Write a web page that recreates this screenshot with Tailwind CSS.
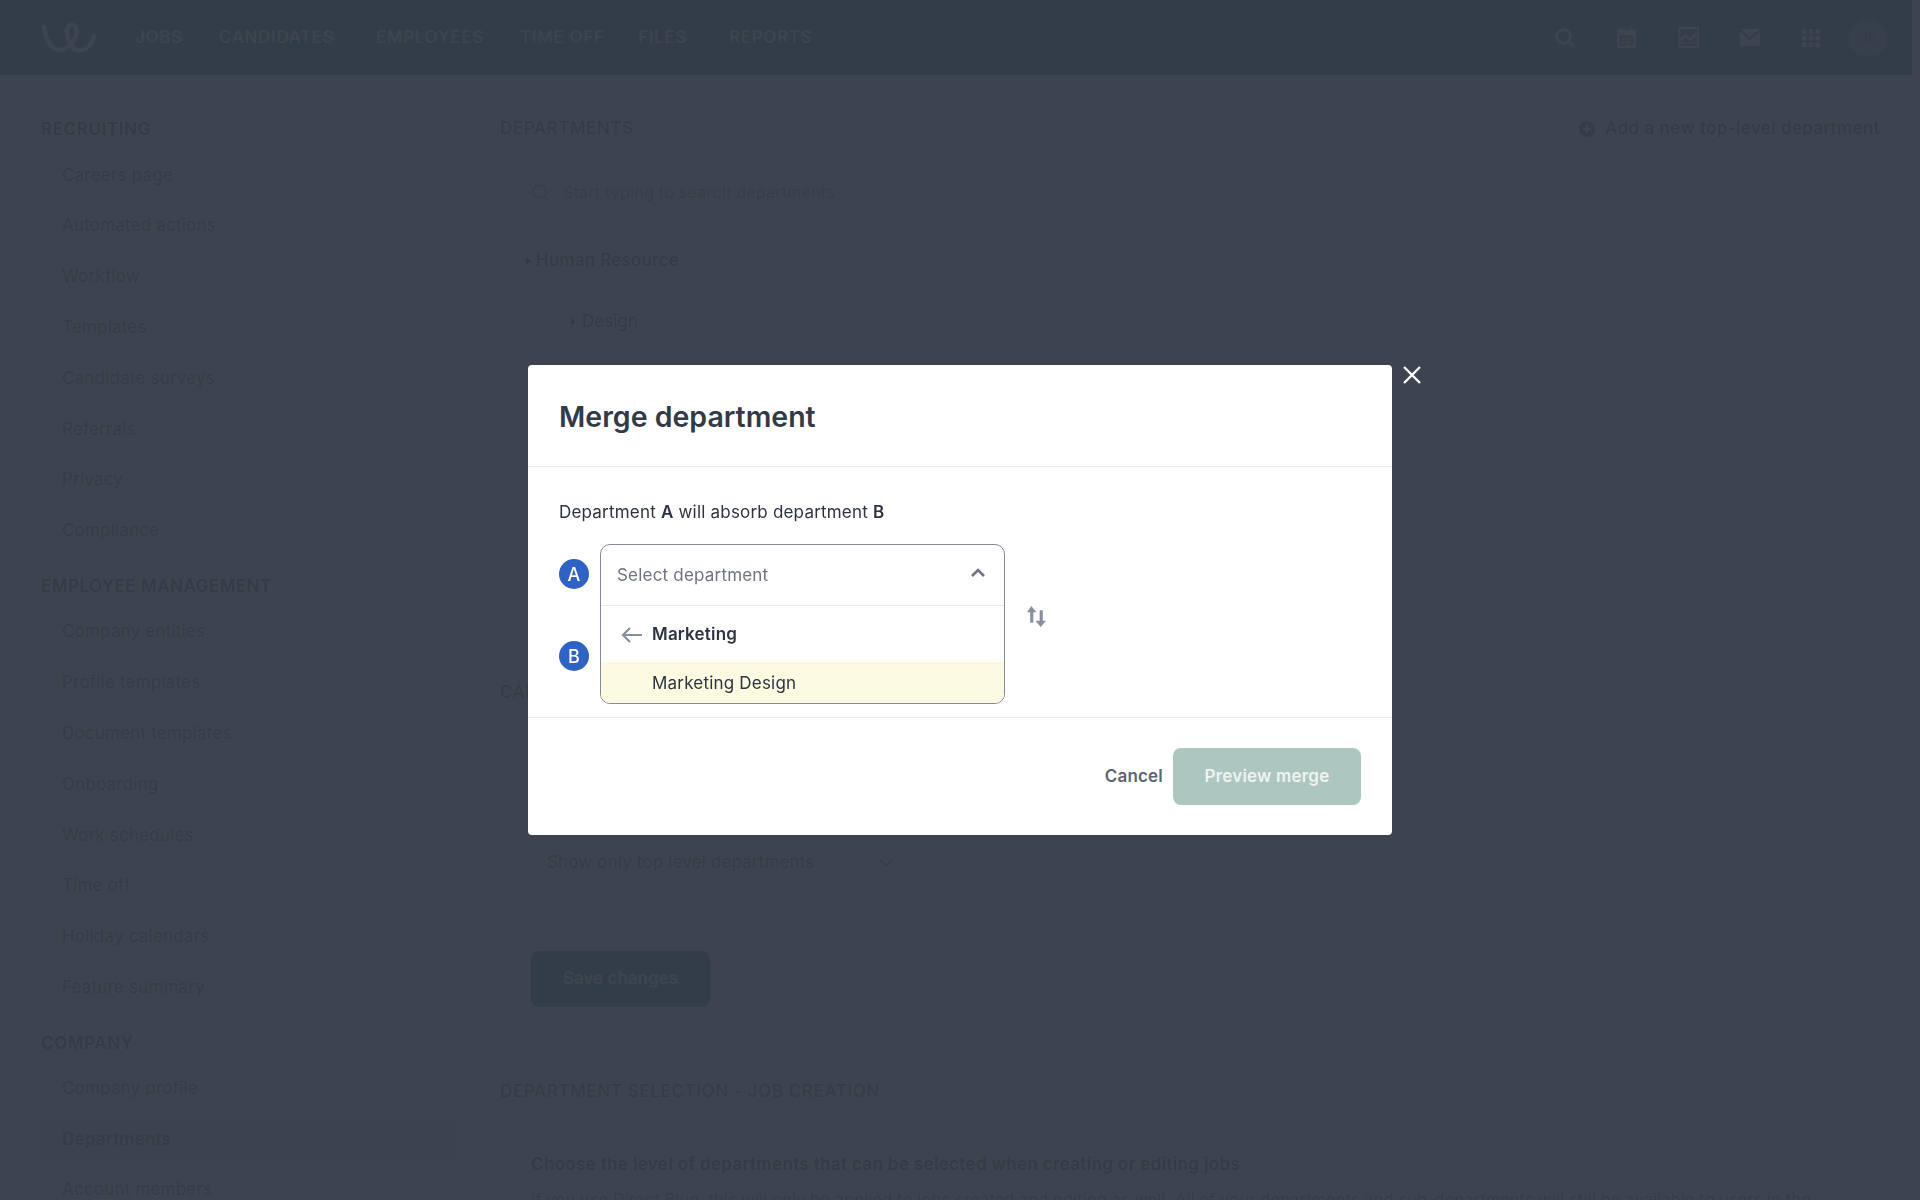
<!DOCTYPE html>
<html>
  <head>
    <meta charset="UTF-8" />
    <meta name="viewport" content="width=device-width, initial-scale=1.0" />
    <script src="https://cdn.jsdelivr.net/npm/@tailwindcss/browser@4"></script>
  </head>
  <body class="h-screen overflow-hidden bg-white font-['Inter',sans-serif] text-[#1f2733]">
    <!-- page behind the modal -->
    <header class="flex h-[75px] items-center bg-[#00604a] pl-[41px] pr-[33px] text-white">
      <svg class="h-[32px] w-[56px] opacity-90" viewBox="0 0 56 32" fill="none" stroke="currentColor" stroke-width="4.5" stroke-linecap="round">
        <path d="M3 5C5 20 12 29 20 28C26 27 36 16 36 10C36 5 33 3 31 3C28 3 25 6 26 12C27 20 33 29 38 28C45 28 52 22 53 14" />
      </svg>
      <nav class="ml-[38px] flex pt-[1px] text-[17px] font-medium tracking-[0.7px]">
        <a class="w-[84px]">JOBS</a>
        <a class="w-[157px]">CANDIDATES</a>
        <a class="w-[144px]">EMPLOYEES</a>
        <a class="w-[118px]">TIME OFF</a>
        <a class="w-[91px]">FILES</a>
        <a>REPORTS</a>
      </nav>
      <div class="ml-auto flex items-center">
        <svg class="mr-[41px] h-[20px] w-[20px]" viewBox="0 0 20 20" fill="none" stroke="currentColor" stroke-width="2.4"><circle cx="8.5" cy="8.5" r="7" /><path d="M13.500 13.500L19 19" /></svg>
        <svg class="mr-[41px] h-[21px] w-[21px]" viewBox="0 0 20 20" fill="currentColor"><path d="M1 3h3V1h2v2h8V1h2v2h3v17H1zM3.500 8v9.500h13V8zM5.500 10h2.500v2.500H5.500zM8.900 10h2.300v2.500H8.900zM12 10h2.500v2.500H12zM5.500 13.500h2.500V16H5.500zM8.900 13.500h2.300V16H8.900zM12 13.500h2.500V16H12z" fill-rule="evenodd" /></svg>
        <svg class="mr-[41px] h-[21px] w-[21px]" viewBox="0 0 20 20" fill="none" stroke="currentColor"><rect x="1" y="1" width="18" height="18" stroke-width="2" /><path d="M2 13l5-5 5 4 6-6" stroke-width="2.6" /><path d="M2 15h16" stroke-width="1" /></svg>
        <svg class="mr-[41px] h-[17px] w-[20px]" viewBox="0 0 20 17" fill="currentColor"><path d="M0 0h20L10 8zM0 3l10 8 10-8v14H0z" /></svg>
        <svg class="mr-[28px] h-[20px] w-[20px]" viewBox="0 0 20 20" fill="currentColor"><path d="M1 1h4.500v4.500H1zM7.750 1h4.500v4.500h-4.500zM14.500 1H19v4.500h-4.500zM1 7.750h4.500v4.500H1zM7.750 7.750h4.500v4.500h-4.500zM14.500 7.750H19v4.500h-4.500zM1 14.500h4.500V19H1zM7.750 14.500h4.500V19h-4.500zM14.500 14.500H19V19h-4.500z" /></svg>
        <div class="flex h-[38px] w-[38px] items-center justify-center rounded-full bg-[#5c9c8c] text-[14px] text-[#1f2733]">JS</div>
      </div>
    </header>

    <div class="flex">
      <aside class="w-[500px] shrink-0 pl-[41px] pr-[45px] pt-[42px] text-[17px] tracking-[0.2px]">
        <h3 class="h-[24px] text-[17px] leading-[24px] font-semibold tracking-[0.6px]">RECRUITING</h3>
        <ul class="mt-[9px] flex flex-col text-[#3a4350]">
          <li class="flex h-[50.8px] items-center pl-[21px]">Careers page</li>
          <li class="flex h-[50.8px] items-center pl-[21px]">Automated actions</li>
          <li class="flex h-[50.8px] items-center pl-[21px]">Workflow</li>
          <li class="flex h-[50.8px] items-center pl-[21px]">Templates</li>
          <li class="flex h-[50.8px] items-center pl-[21px]">Candidate surveys</li>
          <li class="flex h-[50.8px] items-center pl-[21px]">Referrals</li>
          <li class="flex h-[50.8px] items-center pl-[21px]">Privacy</li>
          <li class="flex h-[50.8px] items-center pl-[21px]">Compliance</li>
        </ul>
        <h3 class="mt-[17.4px] h-[24px] text-[17px] leading-[24px] font-semibold tracking-[0.5px]">EMPLOYEE MANAGEMENT</h3>
        <ul class="mt-[9px] flex flex-col text-[#3a4350]">
          <li class="flex h-[50.8px] items-center pl-[21px]">Company entities</li>
          <li class="flex h-[50.8px] items-center pl-[21px]">Profile templates</li>
          <li class="flex h-[50.8px] items-center pl-[21px]">Document templates</li>
          <li class="flex h-[50.8px] items-center pl-[21px]">Onboarding</li>
          <li class="flex h-[50.8px] items-center pl-[21px]">Work schedules</li>
          <li class="flex h-[50.8px] items-center pl-[21px]">Time off</li>
          <li class="flex h-[50.8px] items-center pl-[21px]">Holiday calendars</li>
          <li class="flex h-[50.8px] items-center pl-[21px]">Feature summary</li>
        </ul>
        <h3 class="mt-[17.4px] h-[24px] text-[17px] leading-[24px] font-semibold tracking-[0.6px]">COMPANY</h3>
        <ul class="mt-[8px] flex flex-col text-[#3a4350]">
          <li class="flex h-[51.6px] items-center pl-[21px]">Company profile</li>
          <li class="my-[5.3px] flex h-[40px] items-center rounded-md bg-[#d8dde0] pl-[21px] font-semibold">Departments</li>
          <li class="flex h-[50.6px] items-center pl-[21px]">Account members</li>
        </ul>
      </aside>

      <main class="min-w-0 flex-1 pr-[40px] pt-[42px]">
        <div class="flex h-[24px] items-center justify-between">
          <h2 class="text-[17px] font-medium tracking-[0.6px] text-[#3a4350]">DEPARTMENTS</h2>
          <div class="flex items-center gap-[10px] text-[17px] font-medium tracking-[0.45px]">
            <svg class="h-[16px] w-[16px]" viewBox="0 0 16 16"><circle cx="8" cy="8" r="8" fill="#00604a" /><path d="M8 4v8M4 8h8" stroke="#fff" stroke-width="2" /></svg>
            <span>Add a new top-level department</span>
          </div>
        </div>
        <div class="ml-[32px] mt-[39px] flex h-[24px] items-center gap-[14px] text-[16px] tracking-[0.25px] text-[#5b6472]">
          <svg class="h-[17px] w-[17px]" viewBox="0 0 17 17" fill="none" stroke="currentColor" stroke-width="1.5"><circle cx="7.500" cy="7.500" r="6.500" /><path d="M12 12l4 4" /></svg>
          <span>Start typing to search departments</span>
        </div>
        <div class="ml-[26px] mt-[45px] flex h-[24px] items-center gap-[5px] text-[17px] font-medium tracking-[0.3px]">
          <span class="h-0 w-0 border-y-[4px] border-l-[5px] border-y-transparent border-l-[#1f2733]"></span>
          <span>Human Resource</span>
        </div>
        <div class="ml-[71px] mt-[37px] flex h-[24px] items-center gap-[6px] text-[17px]">
          <span class="h-0 w-0 border-y-[4px] border-l-[5px] border-y-transparent border-l-[#1f2733]"></span>
          <span>Design</span>
        </div>

        <h2 class="mt-[346px] h-[24px] text-[17px] font-medium tracking-[0.6px] text-[#3a4350]">CAREERS PAGE</h2>
        <div class="ml-[47px] mt-[147px] flex h-[24px] w-[346px] items-center justify-between text-[17px] tracking-[0.15px] text-[#3a4350]">
          <span>Show only top level departments</span>
          <svg class="h-[8px] w-[14px]" viewBox="0 0 14 8" fill="none" stroke="currentColor" stroke-width="1.5"><path d="M1 1l6 6 6-6" /></svg>
        </div>
        <button class="ml-[31px] mt-[76px] block h-[56px] w-[179px] rounded-lg bg-[#00604a] text-[17px] font-semibold text-white">Save changes</button>
        <h2 class="mt-[72px] h-[24px] text-[17px] font-medium tracking-[0.65px] text-[#3a4350]">DEPARTMENT SELECTION - JOB CREATION</h2>
        <p class="ml-[31px] mt-[49px] h-[24px] text-[17px] leading-[24px] font-semibold tracking-[0.35px]">Choose the level of departments that can be selected when creating or editing jobs</p>
        <p class="ml-[31px] mt-[11px] whitespace-nowrap text-[16px] leading-[24px] tracking-[0.3px] text-[#3a4350]">If you use Direct Blue, this will only be applied to jobs created and editing as well. All of your departments and sub-departments will still be available to users in the</p>
      </main>
    </div>
    <div class="fixed inset-y-0 right-0 w-[8px] bg-[#f5f5f5]"></div>

    <!-- overlay -->
    <div class="fixed inset-0 flex items-center justify-center bg-[#353c47]/[0.955]">
      <div class="relative flex h-[470px] w-[864px] flex-col rounded-[4px] bg-white">
        <button class="absolute -right-[30px] top-0 flex h-[20px] w-[20px] items-center justify-center text-white">
          <svg class="h-[18px] w-[18px]" viewBox="0 0 18 18" fill="none" stroke="currentColor" stroke-width="2.4"><path d="M1 1l16 16M17 1L1 17" /></svg>
        </button>
        <div class="flex h-[102px] shrink-0 items-center border-b border-[#e5e7eb] px-[31px] pt-[3px]">
          <h1 class="text-[28.5px] font-semibold text-[#333a47]">Merge department</h1>
        </div>
        <div class="relative flex-1 pl-[31px] pt-[33px] text-[17px] tracking-[0.2px]">
          <p class="h-[24px] leading-[24px] text-[#2d3340]">Department <b class="font-semibold">A</b> will absorb department <b class="font-semibold">B</b></p>
          <div class="mt-[20px] flex items-start gap-[11px]">
            <div class="flex flex-col gap-[52px] pt-[15px]">
              <span class="flex h-[30px] w-[30px] items-center justify-center rounded-full bg-[#2f62c7] text-[18px] font-medium text-white">A</span>
              <span class="flex h-[30px] w-[30px] items-center justify-center rounded-full bg-[#2f62c7] text-[18px] font-medium text-white">B</span>
            </div>
            <div class="h-[160px] w-[405px] overflow-hidden rounded-[10px] border-[1.5px] border-[#858a97] bg-white">
              <div class="flex h-[61px] items-center justify-between border-b border-[#e5e7eb] pl-[16px] pr-[19px] pt-[1px] text-[#6f7482]">
                <span>Select department</span>
                <svg class="mb-[5px] h-[10px] w-[14px]" viewBox="0 0 14 10" fill="none" stroke="currentColor" stroke-width="2.6"><path d="M1 8l6-6 6 6" /></svg>
              </div>
              <div class="flex h-[56px] items-center pl-[20px] pt-[2px] font-semibold text-[#2d3340]">
                <svg class="mr-[10px] h-[16px] w-[21px] text-[#8a8f9c]" viewBox="0 0 21 16" fill="none" stroke="currentColor" stroke-width="2.2"><path d="M21 8H2M9 1L2 8l7 7" /></svg>
                <span>Marketing</span>
              </div>
              <div class="flex h-[41px] items-center bg-[#fdfae2] pl-[51px] pt-[2px] text-[#2d3340]">Marketing Design</div>
            </div>
            <svg class="ml-[10px] mt-[62px] h-[21px] w-[21px] text-[#8a8f9c]" viewBox="0 0 20 20" fill="currentColor"><path d="M5 0l5 6H7v10H4V6H1zM13 4h3v10h3l-5 6-5-6h4z" /></svg>
          </div>
        </div>
        <div class="flex h-[118px] shrink-0 items-center justify-end gap-[10px] border-t border-[#e5e7eb] px-[31px] text-[17px] tracking-[0.2px]">
          <button class="pt-[1px] font-semibold text-[#5f6473]">Cancel</button>
          <button class="h-[57px] w-[188px] rounded-lg bg-[#aec6c0] pt-[1px] font-semibold text-[#eef4f2]">Preview merge</button>
        </div>
      </div>
    </div>
  </body>
</html>
